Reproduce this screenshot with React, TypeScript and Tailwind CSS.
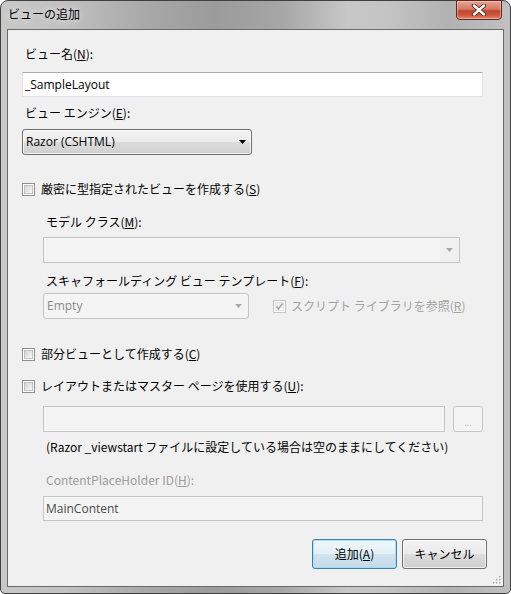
import React from "react";

const FONT = "font-['Open_Sans','Noto_Sans_CJK_JP',sans-serif]";
const JP = "font-['Noto_Sans_CJK_JP','Open_Sans',sans-serif]";

function Check({ checked = false, disabled = false }: { checked?: boolean; disabled?: boolean }) {
  return (
    <span
      className={`relative shrink-0 w-[13px] h-[13px] border ${
        disabled ? "border-[#c6c6c6]" : "border-[#8f8f8f]"
      } bg-white p-[1px]`}
    >
      <span
        className={`block w-full h-full border ${
          disabled
            ? "border-[#e4e4e4] bg-[linear-gradient(135deg,#ececec,#fafafa)]"
            : "border-[#c2c2c2] bg-[linear-gradient(135deg,#d4d4d4,#f7f7f7)]"
        }`}
      />
      {checked && (
        <svg className="absolute left-[1px] top-[1px]" width="9" height="9" viewBox="0 0 9 9">
          <path d="M1.5 4.5 L3.5 7 L7.5 1.5" fill="none" stroke={disabled ? "#a8a8a8" : "#333"} strokeWidth="1.6" />
        </svg>
      )}
    </span>
  );
}

function Arrow({ disabled = false }: { disabled?: boolean }) {
  return (
    <svg width="7" height="4" viewBox="0 0 7 4">
      <path d="M0 0 H7 L3.5 4 Z" fill={disabled ? "#a9a9a9" : "#000"} />
    </svg>
  );
}

function Label({ children, gray = false, indent = false }: { children: React.ReactNode; gray?: boolean; indent?: boolean }) {
  return (
    <div
      className={`h-[16px] leading-[16px] text-[12px] whitespace-nowrap ${JP} ${
        gray ? "text-[#9c9c9c]" : "text-black"
      } ${indent ? "pl-[24px]" : "pl-[3px]"}`}
    >
      {children}
    </div>
  );
}

function CheckRow({ children }: { children: React.ReactNode }) {
  return (
    <div className={`flex items-center gap-[6px] h-[16px] text-[12px] leading-[16px] text-black whitespace-nowrap ${JP}`}>
      <Check />
      <span>{children}</span>
    </div>
  );
}

export default function App() {
  return (
    <div className="w-[511px] h-[594px] overflow-hidden bg-white">
      <div className="w-[511px] h-[594px] flex flex-col rounded-t-[8px] rounded-b-[5px] border border-[#404040] bg-[linear-gradient(90deg,#c8c8c8_0%,#c2c2c2_12%,#a9a9a9_28%,#9b9b9b_42%,#a6a6a6_55%,#c7c7c7_68%,#c4c4c4_76%,#b2b2b2_88%,#c0c0c0_100%)]">
        {/* title bar */}
        <div className="h-[28px] flex items-start justify-between">
          <div
            className={`pl-[7px] pt-[5px] text-[12px] leading-[16px] text-black ${JP} [text-shadow:0_0_6px_rgba(255,255,255,0.9)]`}
          >
            ビューの追加
          </div>
          <div className="mr-[8px] -mt-px w-[46px] h-[20px] rounded-b-[4px] border border-[#5a2a22] bg-[linear-gradient(180deg,#e7a593_0%,#d47a66_45%,#c2442b_55%,#cf5a3f_80%,#e08a6c_100%)] flex items-center justify-center shadow-[inset_0_0_0_1px_rgba(255,210,200,0.5)]">
            <svg width="16" height="12" viewBox="0 0 16 12">
              <path d="M3 1.5 L13 10.5 M13 1.5 L3 10.5" stroke="#4a2a25" strokeWidth="4.2" strokeLinecap="round" />
              <path d="M3 1.5 L13 10.5 M13 1.5 L3 10.5" stroke="#ffffff" strokeWidth="2.4" strokeLinecap="round" />
            </svg>
          </div>
        </div>

        {/* client */}
        <div className="relative mx-[6px] h-[558px] border border-[#6a6a6a] bg-[#f0f0f0]">
          <div className="flex flex-col pl-[14px] pr-[20px]">
            <div className="mt-[16px]">
              <Label>
                ビュー名(<u>N</u>):
              </Label>
            </div>
            <div className="mt-[10px] h-[25px] w-full border border-[#e2e3ea] border-t-[#abadb3] bg-white flex items-center pl-[2px]">
              <span className={`text-[12px] text-black ${FONT}`}>_SampleLayout</span>
            </div>

            <div className="mt-[8px]">
              <Label>
                ビュー エンジン(<u>E</u>):
              </Label>
            </div>
            <div className="mt-[8px] h-[26px] w-[230px] rounded-[3px] border border-[#707070] bg-[linear-gradient(180deg,#f2f2f2_0%,#ebebeb_50%,#dddddd_50%,#cfcfcf_100%)] flex items-center justify-between pl-[3px] pr-[5px] shadow-[inset_0_0_0_1px_rgba(255,255,255,0.7)]">
              <span className={`text-[12px] text-black ${FONT}`}>Razor (CSHTML)</span>
              <Arrow />
            </div>

            <div className="mt-[26px]">
              <CheckRow>
                厳密に型指定されたビューを作成する(<u>S</u>)
              </CheckRow>
            </div>

            <div className="mt-[17px]">
              <Label indent>
                モデル クラス(<u>M</u>):
              </Label>
            </div>
            <div className="mt-[7px] ml-[21px] h-[26px] w-[417px] border border-[#c5c5c5] bg-[#f4f4f4] flex items-center justify-end">
              <div className="h-full w-[19px] bg-[#f0f0f0] flex items-center justify-center">
                <Arrow disabled />
              </div>
            </div>

            <div className="mt-[10px]">
              <Label indent>
                スキャフォールディング ビュー テンプレート(<u>F</u>):
              </Label>
            </div>
            <div className="mt-[4px] h-[26px] flex items-center">
              <div className="ml-[21px] h-[26px] w-[206px] rounded-[3px] border border-[#c5c5c5] bg-[#f4f4f4] flex items-center justify-between pl-[3px] pr-[6px]">
                <span className={`text-[12px] text-[#8a8a8a] ${FONT}`}>Empty</span>
                <Arrow disabled />
              </div>
              <div className="ml-[24px] flex items-center gap-[5px]">
                <Check checked disabled />
                <span className={`text-[12px] leading-[16px] text-[#a3a3a3] whitespace-nowrap ${JP}`}>
                  スクリプト ライブラリを参照(<u>R</u>)
                </span>
              </div>
            </div>

            <div className="mt-[27px]">
              <CheckRow>
                部分ビューとして作成する(<u>C</u>)
              </CheckRow>
            </div>
            <div className="mt-[16px]">
              <CheckRow>
                レイアウトまたはマスター ページを使用する(<u>U</u>):
              </CheckRow>
            </div>

            <div className="mt-[12px] ml-[21px] h-[26px] flex gap-[8px]">
              <div className="h-full w-[402px] border border-[#c5c5c5] bg-[#f4f4f4]" />
              <div className="h-full w-[30px] rounded-[3px] border border-[#c5c5c5] bg-[#f4f4f4] flex items-end justify-center pb-[4px]">
                <span className={`text-[9px] leading-[9px] text-[#a8a8a8] ${FONT}`}>...</span>
              </div>
            </div>

            <div className="mt-[7px]">
              <Label indent>(Razor _viewstart ファイルに設定している場合は空のままにしてください)</Label>
            </div>

            <div className="mt-[17px]">
              <Label indent gray>
                ContentPlaceHolder ID(<u>H</u>):
              </Label>
            </div>
            <div className="mt-[8px] ml-[21px] h-[25px] w-[440px] border border-[#c5c5c5] bg-[#f4f4f4] flex items-center pl-[2px]">
              <span className={`text-[12px] text-[#4a4a4a] ${FONT}`}>MainContent</span>
            </div>

            <div className="mt-[18px] mr-[-4px] flex justify-end gap-[5px]">
              <div className="h-[30px] w-[85px] rounded-[3px] border border-[#3c7fb1] bg-[linear-gradient(180deg,#f0f7fb_0%,#e3eff6_50%,#d2e5f0_50%,#c3dae7_100%)] shadow-[inset_0_0_0_1px_rgba(160,220,250,0.9)] flex items-center justify-center">
                <span className={`text-[12px] text-black ${JP}`}>
                  追加(<u>A</u>)
                </span>
              </div>
              <div className="h-[30px] w-[85px] rounded-[3px] border border-[#707070] bg-[linear-gradient(180deg,#f2f2f2_0%,#ebebeb_50%,#dddddd_50%,#cfcfcf_100%)] shadow-[inset_0_0_0_1px_rgba(255,255,255,0.7)] flex items-center justify-center">
                <span className={`text-[12px] text-black ${JP}`}>キャンセル</span>
              </div>
            </div>
          </div>

          {/* resize grip */}
          <svg className="absolute right-[1px] bottom-[1px]" width="10" height="10" viewBox="0 0 10 10">
            {[
              [7, 1],
              [4, 4],
              [7, 4],
              [1, 7],
              [4, 7],
              [7, 7],
            ].map(([x, y], i) => (
              <g key={i}>
                <rect x={x + 1} y={y + 1} width="1.5" height="1.5" fill="#ffffff" />
                <rect x={x} y={y} width="1.5" height="1.5" fill="#a8a8a8" />
              </g>
            ))}
          </svg>
        </div>
      </div>
    </div>
  );
}
